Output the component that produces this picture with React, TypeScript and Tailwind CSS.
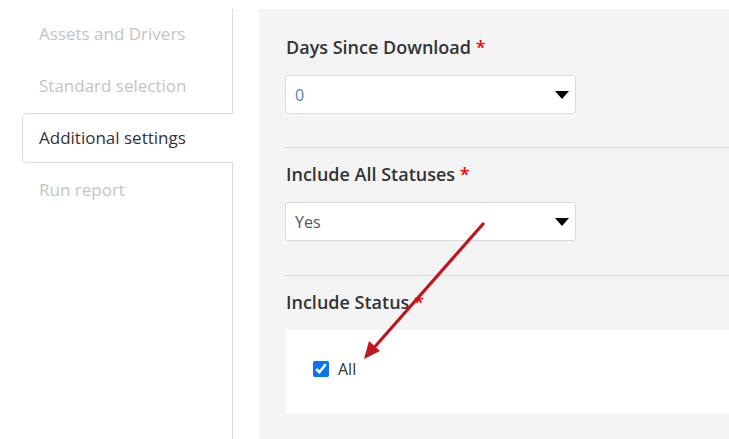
import React from 'react';

const steps = [
  { label: 'Assets and Drivers', active: false },
  { label: 'Standard selection', active: false },
  { label: 'Additional settings', active: true },
  { label: 'Run report', active: false },
];

function Caret() {
  return (
    <svg width="14" height="8" viewBox="0 0 14 8" className="shrink-0">
      <polygon points="0,0 14,0 7,8" fill="#000" />
    </svg>
  );
}

function SelectBox({ value, valueClass }: { value: string; valueClass: string }) {
  return (
    <div className="flex h-[39px] w-[291px] items-center justify-between rounded-[3px] border border-[#dcdcdc] bg-white pl-[9px] pr-[6px]">
      <span className={`text-[16px] ${valueClass}`}>{value}</span>
      <Caret />
    </div>
  );
}

function Label({ text }: { text: string }) {
  return (
    <div className="text-[18px] leading-[24px] font-semibold text-[#333]">
      {text} <span className="text-[#ff0000]">*</span>
    </div>
  );
}

export default function App() {
  return (
    <div
      className="relative flex h-[439px] w-[729px] overflow-hidden bg-white"
      style={{ fontFamily: '"Open Sans", "Noto Sans", sans-serif' }}
    >
      {/* Steps */}
      <div className="mt-[9px] w-[233px] shrink-0 border-r border-[#dcdcdc]">
        {steps.map((s) =>
          s.active ? (
            <div
              key={s.label}
              className="mb-[2px] ml-[22px] -mr-px flex h-[50px] items-center rounded-l-[5px] border border-r-0 border-[#dcdcdc] bg-white pl-[16px] text-[17px] text-[#333]"
            >
              {s.label}
            </div>
          ) : (
            <div key={s.label} className="mb-[2px] ml-[22px] flex h-[50px] items-center pl-[17px] text-[17px] text-[#c4c4c4]">
              {s.label}
            </div>
          )
        )}
      </div>

      {/* Form */}
      <div className="ml-[26px] mt-[9px] flex-1 bg-[#f4f4f4] pl-[27px]">
        <div className="pt-[26px]">
          <Label text="Days Since Download" />
          <div className="mt-[16px] -ml-px">
            <SelectBox value="0" valueClass="text-[#4f86c0]" />
          </div>
        </div>
        <div className="mt-[33px] -ml-px border-t border-[#dcdcdc]" />
        <div className="pt-[14px]">
          <Label text="Include All Statuses" />
          <div className="mt-[16px] -ml-px">
            <SelectBox value="Yes" valueClass="text-[#555]" />
          </div>
        </div>
        <div className="mt-[34px] -ml-px border-t border-[#dcdcdc]" />
        <div className="pt-[14px]">
          <Label text="Include Status" />
          <div className="mt-[16px] flex h-[83px] items-start bg-white pl-[27px] pt-[30px]">
            <label className="flex items-center gap-[9px] text-[16px] leading-[18px] text-[#333]">
              <input type="checkbox" defaultChecked className="m-0 h-4 w-4 accent-[#0b75f0]" />
              All
            </label>
          </div>
        </div>
      </div>

      {/* Annotation arrow */}
      <svg className="pointer-events-none absolute left-0 top-0" width="729" height="439">
        <line x1="483" y1="224" x2="372" y2="350" stroke="#c0151c" strokeWidth="3.2" strokeLinecap="round" />
        <polygon points="364,359 380,351 369,341" fill="#c0151c" />
      </svg>
    </div>
  );
}
